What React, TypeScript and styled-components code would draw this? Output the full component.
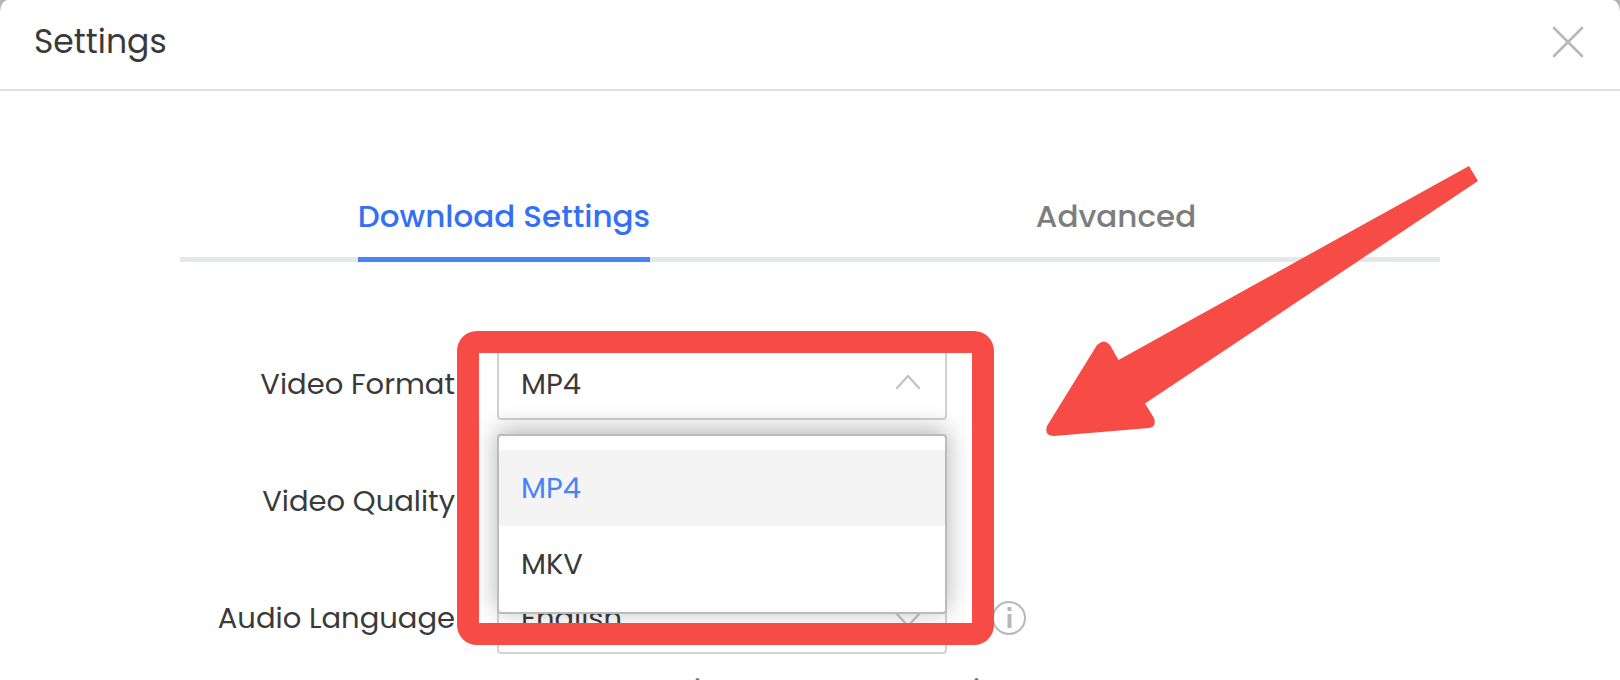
import React from "react";
import styled, { createGlobalStyle } from "styled-components";

const GlobalStyle = createGlobalStyle`
  *, *::before, *::after { box-sizing: border-box; }
  html, body, #root { height: 100%; }
  body {
    margin: 0;
    background: #b4b4b4;
    color: #3a3a3a;
    font-family: Poppins, Inter, "Liberation Sans", sans-serif;
  }
  button, select { font: inherit; color: inherit; }
`;

const Dialog = styled.div`
  height: 100%;
  overflow: hidden;
  display: flex;
  flex-direction: column;
  background: #fff;
  border-radius: 8px 8px 0 0 / 12px 12px 0 0;
`;

const Header = styled.header`
  display: flex;
  flex: none;
  align-items: center;
  justify-content: space-between;
  height: 91px;
  padding: 0 32px 6px 34px;
  border-bottom: 2px solid #e0e0e0;
`;

const Title = styled.h1`
  margin: 0;
  font-size: 33px;
  line-height: 48px;
  font-weight: 400;
`;

const IconButton = styled.button`
  display: flex;
  padding: 0;
  border: 0;
  background: none;
  cursor: pointer;
`;

const Body = styled.main`
  position: relative;
  flex: 1;
  padding: 98px 180px 0;
`;

const TabList = styled.div`
  display: flex;
  height: 73px;
  padding: 0 18px;
  box-shadow: inset 0 -5px #e4e7ed;
`;

const TabSlot = styled.div`
  display: flex;
  flex: 1;
  justify-content: center;
`;

const Tab = styled.button<{ $active?: boolean }>`
  padding: 0 0 14px;
  border: 0;
  border-bottom: 5px solid ${(p) => (p.$active ? "#4584f7" : "transparent")};
  background: none;
  color: ${(p) => (p.$active ? "#3370f4" : "#7d7d7d")};
  font-size: 31px;
  font-weight: 500;
  cursor: pointer;
`;

const Form = styled.form`
  display: flex;
  flex-direction: column;
  gap: 45px;
  padding-top: 86px;
`;

const Row = styled.div`
  display: grid;
  grid-template-columns: 317px 450px auto;
  justify-content: start;
  align-items: center;
  height: 72px;
`;

const Label = styled.label`
  padding-right: 42px;
  text-align: right;
  font-size: 29px;
  line-height: 42px;
  white-space: nowrap;
`;

const Field = styled.div`
  position: relative;
  display: grid;
  align-items: center;
  height: 72px;
`;

const Select = styled.select`
  appearance: none;
  width: 100%;
  height: 72px;
  padding: 0 60px 0 22px;
  border: 2px solid #d2d2d2;
  border-radius: 4px;
  background: #fff;
  font-size: 29px;
`;

const FieldIcon = styled.svg`
  position: absolute;
  right: 26px;
  pointer-events: none;
`;

const InfoButton = styled(IconButton)`
  margin-left: 44px;
`;

const Menu = styled.ul`
  position: absolute;
  z-index: 1;
  top: 86px;
  left: 0;
  right: 0;
  margin: 0;
  padding: 14px 0 10px;
  border: 2px solid #bbb;
  border-radius: 4px;
  background: #fff;
  box-shadow: 0 -4px 26px rgba(0, 0, 0, 0.3);
  list-style: none;
`;

const Option = styled.li<{ $selected?: boolean }>`
  padding: 0 22px;
  background: ${(p) => (p.$selected ? "#f4f4f4" : "#fff")};
  color: ${(p) => (p.$selected ? "#4584f7" : "#3a3a3a")};
  font-size: 29px;
  line-height: 76px;
`;

const Highlight = styled.div`
  position: absolute;
  z-index: 2;
  top: -17px;
  left: -40px;
  right: -47px;
  height: 314px;
  border: 22px solid #f74b46;
  border-radius: 20px;
  pointer-events: none;
`;

const Arrow = styled.svg`
  position: absolute;
  z-index: 2;
  top: 69px;
  left: 1040px;
  pointer-events: none;
`;

const HintDots = styled.svg`
  display: block;
  margin: 24px 0 0 510px;
`;

const Chevron = ({ up = false }: { up?: boolean }) => (
  <FieldIcon width="26" height="18" viewBox="0 0 26 18" fill="none" stroke="#c0c4cc" strokeWidth="2.4" strokeLinecap="round" aria-hidden="true">
    <path d={up ? "M2 13L13 1L24 13" : "M2 5L13 17L24 5"} />
  </FieldIcon>
);

export default function App() {
  return (
    <>
      <GlobalStyle />
      <Dialog role="dialog" aria-labelledby="title">
        <Header>
          <Title id="title">Settings</Title>
          <IconButton type="button" aria-label="Close">
            <svg width="40" height="40" viewBox="0 0 40 40" stroke="#b8b8b8" strokeWidth="2.6" strokeLinecap="round">
              <path d="M6 6L34 34M34 6L6 34" />
            </svg>
          </IconButton>
        </Header>
        <Body>
          <TabList role="tablist">
            <TabSlot>
              <Tab type="button" role="tab" aria-selected="true" $active>Download Settings</Tab>
            </TabSlot>
            <TabSlot>
              <Tab type="button" role="tab" aria-selected="false">Advanced</Tab>
            </TabSlot>
          </TabList>
          <Form>
            <Row>
              <Label htmlFor="format">Video Format</Label>
              <Field>
                <Select id="format" defaultValue="MP4">
                  <option>MP4</option>
                  <option>MKV</option>
                </Select>
                <Chevron up />
                <Menu>
                  <Option $selected>MP4</Option>
                  <Option>MKV</Option>
                </Menu>
                <Highlight />
              </Field>
            </Row>
            <Row>
              <Label htmlFor="quality">Video Quality</Label>
              <Field>
                <Select id="quality" />
              </Field>
            </Row>
            <Row>
              <Label htmlFor="language">Audio Language</Label>
              <Field>
                <Select id="language">
                  <option>English</option>
                </Select>
                <Chevron />
              </Field>
              <InfoButton type="button" aria-label="About audio language">
                <svg width="36" height="36" viewBox="0 0 36 36" fill="none" stroke="#b8b8b8">
                  <circle cx="18" cy="18" r="16" strokeWidth="2" />
                  <path d="M18.500 7v4M18.500 14v14" strokeWidth="4" />
                </svg>
              </InfoButton>
            </Row>
          </Form>
          <HintDots width="300" height="4" viewBox="0 0 300 4" fill="#777" aria-hidden="true">
            <circle cx="7.500" cy="2" r="2" />
            <circle cx="286.500" cy="2" r="2" />
          </HintDots>
          <Arrow width="445" height="285" viewBox="1040 160 445 285" fill="#f74b46" aria-hidden="true">
            <path d="M1469 166L1478 181L1145 403.500L1154 418Q1157 427 1149 428L1054 436Q1044 436 1047 426L1097 345Q1104 338 1110 345L1118.500 360Z" />
          </Arrow>
        </Body>
      </Dialog>
    </>
  );
}
